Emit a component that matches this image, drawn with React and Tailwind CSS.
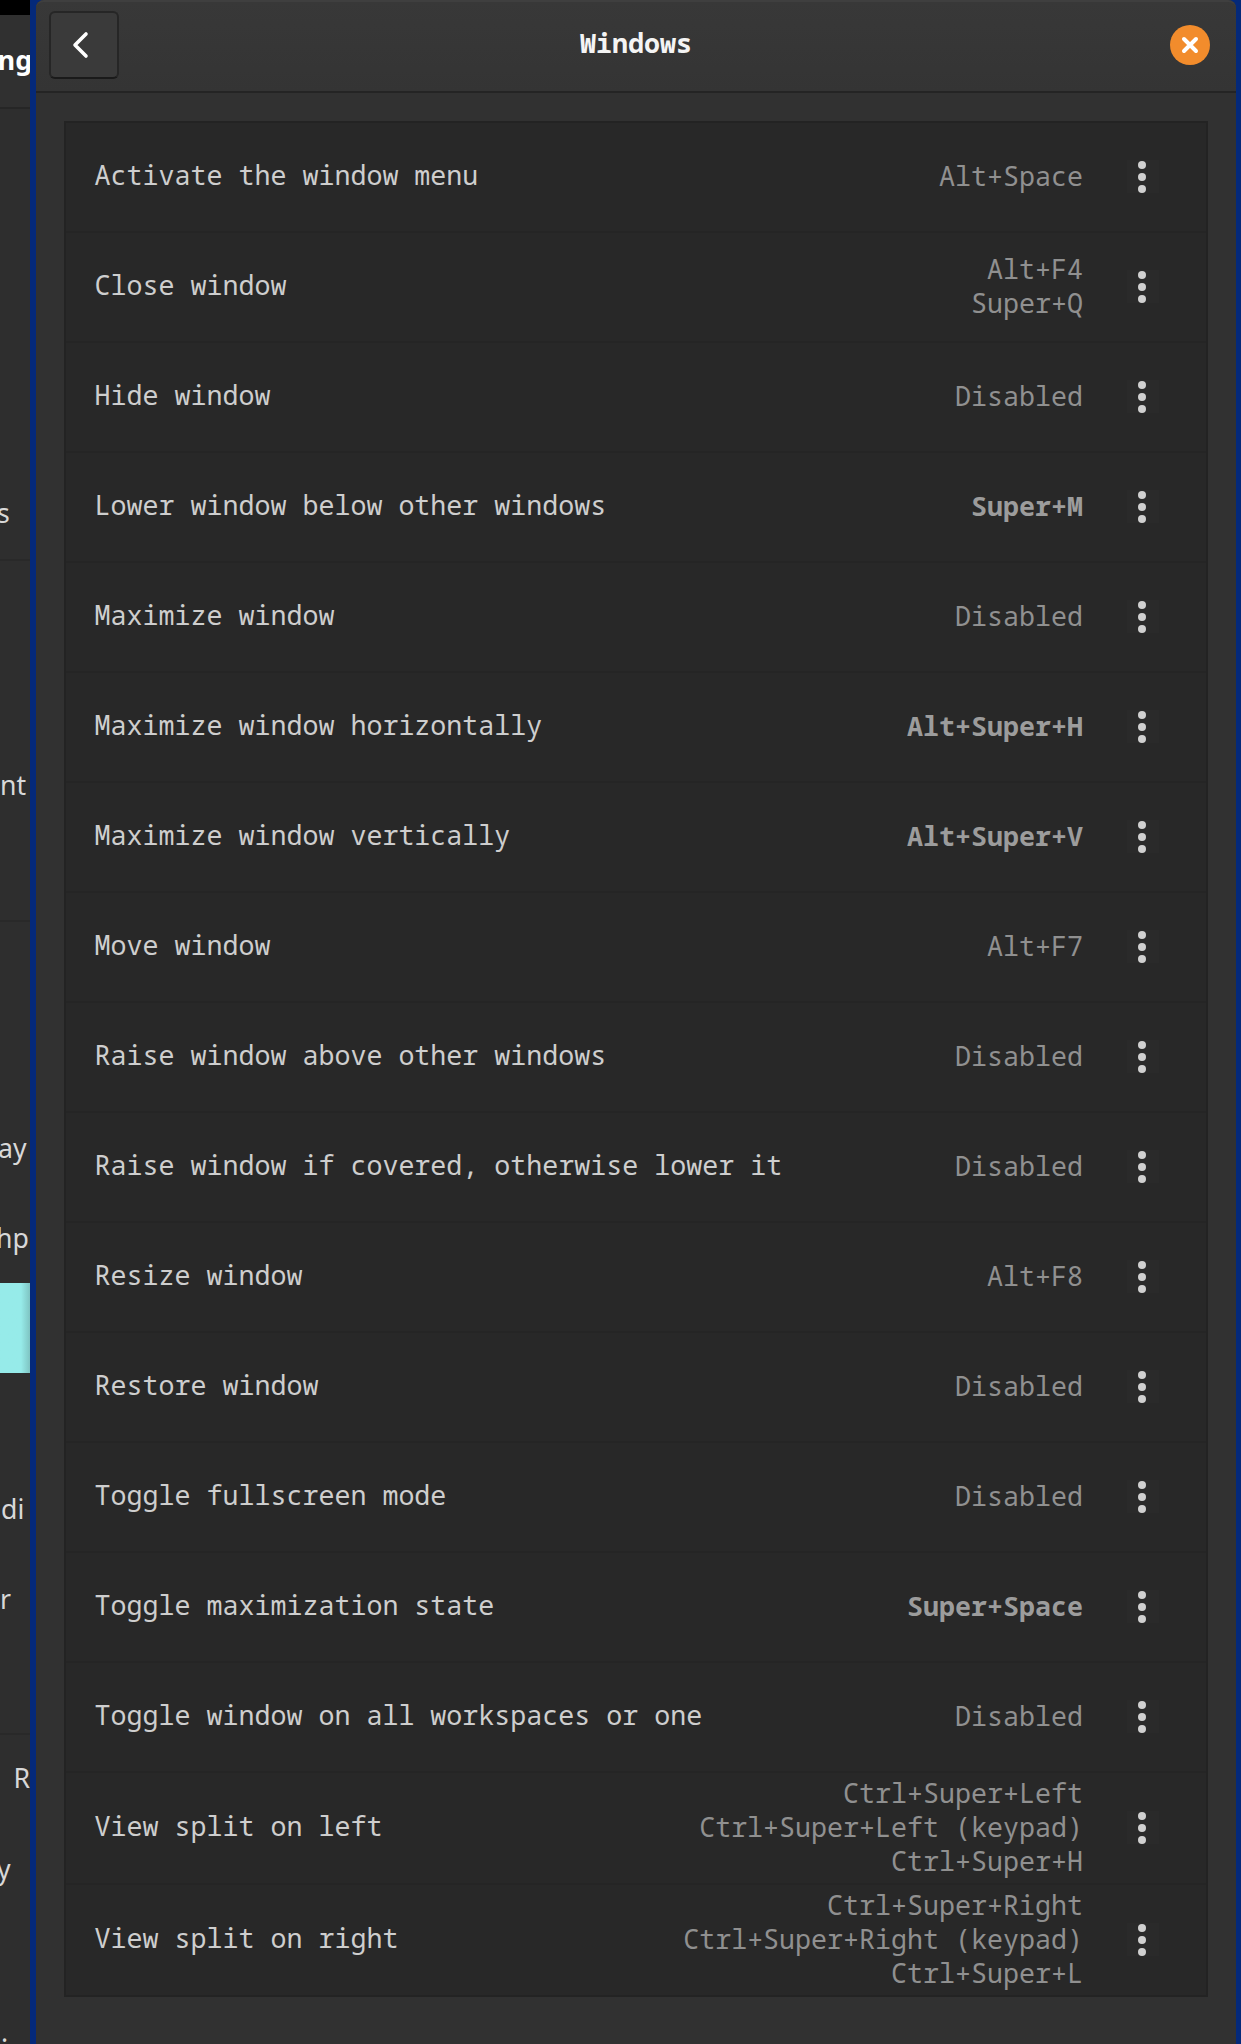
const rows = [
  ["Activate the window menu", ["Alt+Space"]],
  ["Close window", ["Alt+F4", "Super+Q"]],
  ["Hide window", ["Disabled"]],
  ["Lower window below other windows", ["Super+M"], true],
  ["Maximize window", ["Disabled"]],
  ["Maximize window horizontally", ["Alt+Super+H"], true],
  ["Maximize window vertically", ["Alt+Super+V"], true],
  ["Move window", ["Alt+F7"]],
  ["Raise window above other windows", ["Disabled"]],
  ["Raise window if covered, otherwise lower it", ["Disabled"]],
  ["Resize window", ["Alt+F8"]],
  ["Restore window", ["Disabled"]],
  ["Toggle fullscreen mode", ["Disabled"]],
  ["Toggle maximization state", ["Super+Space"], true],
  ["Toggle window on all workspaces or one", ["Disabled"]],
  ["View split on left", ["Ctrl+Super+Left", "Ctrl+Super+Left (keypad)", "Ctrl+Super+H"]],
  ["View split on right", ["Ctrl+Super+Right", "Ctrl+Super+Right (keypad)", "Ctrl+Super+L"]],
];

function Dots() {
  return (
    <svg width="32" height="33" viewBox="0 0 32 33" className="shrink-0">
      <rect width="32" height="33" fill="#2a2a2a" />
      <circle cx="15" cy="5" r="4" fill="#d0d0d0" />
      <circle cx="15" cy="17" r="4" fill="#d0d0d0" />
      <circle cx="15" cy="29" r="4" fill="#d0d0d0" />
    </svg>
  );
}

function Row({ label, keys, bold, index, last }) {
  const height = index === 15 ? "h-[112px]" : "h-[110px]";
  return (
    <div className={`flex items-center pl-[28.5px] pr-[47px] ${height} ${last ? "" : "border-b-2 border-[#252525]"}`}>
      <span className="flex-1 pb-[4px] text-[#cecece]">{label}</span>
      <div className={`flex flex-col items-end pb-[2px] leading-[34px] ${bold ? "font-bold text-[#9c9c9c]" : "text-[#909090]"}`}>
        {keys.map((k) => (
          <span key={k} className="whitespace-pre">{k}</span>
        ))}
      </div>
      <div className="mb-[1px] ml-[44px] flex">
        <Dots />
      </div>
    </div>
  );
}

export default function App() {
  return (
    <div
      className="flex h-[2044px] w-[1241px] overflow-hidden bg-[#04297a] text-[26.67px]"
      style={{ fontFamily: '"Noto Sans Mono", "Noto Sans Mono CJK SC", "DejaVu Sans Mono", "Liberation Mono", monospace' }}
    >
      <aside
        className="relative flex h-full w-[30px] shrink-0 flex-col overflow-hidden bg-[#2e2e2e] text-[#d8d8d8]"
        style={{ fontFamily: '"Noto Sans", sans-serif' }}
      >
        <div className="h-[15px] shrink-0 bg-black" />
        <div className="flex h-[94px] shrink-0 items-center justify-end border-b-2 border-[#262626] bg-[#303030] pb-[3px] font-bold text-white">
          <span className="mr-[-2px]">ng</span>
        </div>
        <div className="flex h-[452px] shrink-0 items-end border-b-2 border-[#292929] pb-[26px]">
          <span className="ml-[-3px]">s</span>
        </div>
        <div className="flex h-[361px] shrink-0 items-end border-b-2 border-[#292929] pb-[115px]">
          <span className="ml-0">nt</span>
        </div>
        <div className="flex h-[258px] shrink-0 items-end pb-[12px]">
          <span className="ml-[-2px]">ay</span>
        </div>
        <div className="flex h-[90px] shrink-0 items-end pb-[12px]">
          <span className="ml-[-4px]">hp</span>
        </div>
        <div className="mt-[13px] h-[90px] shrink-0 bg-gradient-to-r from-[#96ebe9] from-70% to-[#7fc4c2]" />
        <div className="flex h-[168px] shrink-0 items-end pb-[12px]">
          <span className="ml-[1px]">di</span>
        </div>
        <div className="flex h-[90px] shrink-0 items-end pb-[12px]">
          <span className="ml-0">r</span>
        </div>
        <div className="h-[104px] shrink-0 border-b-2 border-[#292929]" />
        <div className="flex h-[63px] shrink-0 items-end justify-end">
          <span className="mr-[-15px]">Re</span>
        </div>
        <div className="flex h-[103px] shrink-0 items-end pb-[12px]">
          <span className="ml-[-3px]">y</span>
        </div>
        <div className="flex flex-1 items-end">
          <span className="mb-[-8px] ml-[1px]">.</span>
        </div>
      </aside>
      <main className="ml-[6px] flex h-full w-[1200px] shrink-0 flex-col rounded-t-[8px] bg-[#313131]">
        <header className="relative flex h-[93px] shrink-0 items-center justify-center rounded-t-[8px] border-b-2 border-t-2 border-b-[#242424] border-t-[#3f3f3f] bg-gradient-to-b from-[#383838] to-[#343434] pb-[8px]">
          <button className="absolute left-[13px] top-[9px] flex h-[68px] w-[70px] items-center justify-center rounded-[6px] border-2 border-[#262626] border-b-[#1a1a1a] bg-[#3a3a3a]">
            <svg width="20" height="30" viewBox="0 0 20 30" fill="none" stroke="#fff" strokeWidth="3.6" strokeLinecap="round" strokeLinejoin="round" className="mr-[6px]">
              <path d="M15 4 L4 15 L15 26" />
            </svg>
          </button>
          <span className="font-bold text-[#f4f4f4]">Windows</span>
          <div className="absolute right-[26px] top-[23px] flex h-[40px] w-[40px] items-center justify-center rounded-full bg-[#f28c2c]">
            <svg width="18" height="18" viewBox="0 0 18 18" fill="none" stroke="#fff" strokeWidth="4" strokeLinecap="round">
              <path d="M3 3 L15 15 M15 3 L3 15" />
            </svg>
          </div>
        </header>
        <div className="px-[28px] pt-[28px]">
          <div className="border-2 border-[#232323] bg-[#282828]">
            {rows.map(([l, k, b], i) => (
              <Row key={l} label={l} keys={k} bold={b} index={i} last={i === rows.length - 1} />
            ))}
          </div>
        </div>
      </main>
    </div>
  );
}
